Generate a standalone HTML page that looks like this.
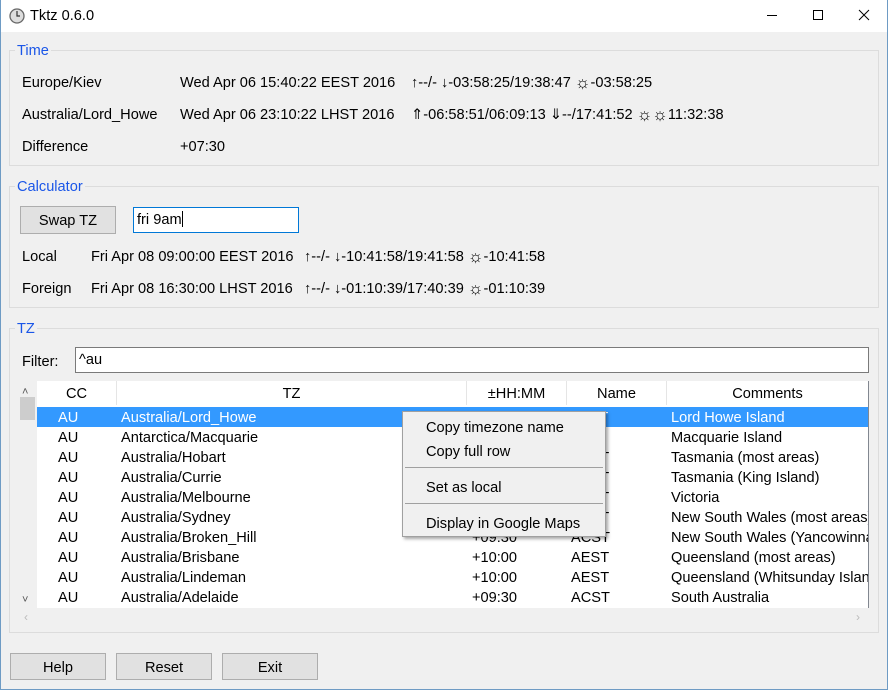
<!DOCTYPE html>
<html><head><meta charset="utf-8"><style>
*{margin:0;padding:0;box-sizing:border-box}
body{width:888px;height:690px;background:#f0f0f0;font-family:"Liberation Sans","DejaVu Sans",sans-serif;font-size:14.6px;color:#000;position:relative;overflow:hidden}
.a{position:absolute;white-space:nowrap;line-height:22px}
.s{font-size:17px;line-height:14px;vertical-align:-1px}
.win{position:absolute;left:0;top:0;width:888px;height:690px;border:1px solid #6e9bc4;border-top:none}
.title{position:absolute;left:0;top:0;width:888px;height:32px;background:#fff}
.grp{position:absolute;border:1px solid #dcdcdc}
.gt{position:absolute;background:#f0f0f0;color:#1a56e8;padding:0 2px;line-height:20px}
.btn{position:absolute;background:#e1e1e1;border:1px solid #adadad;text-align:center;line-height:28px}
.inp{position:absolute;background:#fff;border:1px solid #7a7a7a;padding-left:3px;line-height:25px}
.row{position:absolute;left:37px;width:831px;height:20px}
.c{position:absolute;line-height:22px;top:0;white-space:nowrap;overflow:hidden}
.hd{position:absolute;top:381px;height:24px;line-height:27px;text-align:center;border-right:1px solid #e5e5e5;background:#fff}
.menu{position:absolute;left:402px;top:411px;width:204px;height:126px;background:#f0f0f0;border:1px solid #a0a0a0;box-shadow:2px 2px 3px rgba(0,0,0,.35)}
.mi{position:absolute;left:23px;line-height:22px}
.sep{position:absolute;left:2px;right:2px;height:1px;background:#a0a0a0}
</style></head><body>
<div class="title"></div>
<svg style="position:absolute;left:9px;top:8px" width="16" height="16"><circle cx="8" cy="8" r="7" fill="#ddd" stroke="#666" stroke-width="1.3"/><path d="M8 3v5h3" stroke="#333" stroke-width="1.2" fill="none"/></svg>
<div class="a" style="left:30px;top:5px">Tktz 0.6.0</div>
<div class="a" style="left:767px;top:15px;width:10px;height:1px;background:#000"></div>
<div class="a" style="left:813px;top:10px;width:10px;height:10px;border:1px solid #000"></div>
<svg style="position:absolute;left:858px;top:9px" width="12" height="12"><path d="M1 1L11 11M11 1L1 11" stroke="#000" stroke-width="1"/></svg>
<div class="win"></div>

<div class="grp" style="left:9px;top:50px;width:870px;height:116px"></div>
<div class="gt" style="left:15px;top:41px">Time</div>
<div class="a" style="left:22px;top:72px">Europe/Kiev</div>
<div class="a" style="left:180px;top:72px">Wed Apr 06 15:40:22 EEST 2016</div>
<div class="a" style="left:411px;top:72px">↑--/- ↓-03:58:25/19:38:47 <span class="s">☼</span>-03:58:25</div>
<div class="a" style="left:22px;top:104px">Australia/Lord_Howe</div>
<div class="a" style="left:180px;top:104px">Wed Apr 06 23:10:22 LHST 2016</div>
<div class="a" style="left:411px;top:104px">⇑-06:58:51/06:09:13 ⇓--/17:41:52 <span class="s">☼☼</span>11:32:38</div>
<div class="a" style="left:22px;top:136px">Difference</div>
<div class="a" style="left:180px;top:136px">+07:30</div>

<div class="grp" style="left:9px;top:186px;width:870px;height:122px"></div>
<div class="gt" style="left:15px;top:177px">Calculator</div>
<div class="btn" style="left:20px;top:206px;width:96px;height:28px">Swap TZ</div>
<div class="inp" style="left:133px;top:207px;width:166px;height:26px;border-color:#0078d7">fri 9am<span style="display:inline-block;width:1px;height:16px;background:#000;vertical-align:-3px"></span></div>
<div class="a" style="left:22px;top:246px">Local</div>
<div class="a" style="left:91px;top:246px">Fri Apr 08 09:00:00 EEST 2016</div>
<div class="a" style="left:304px;top:246px">↑--/- ↓-10:41:58/19:41:58 <span class="s">☼</span>-10:41:58</div>
<div class="a" style="left:22px;top:278px">Foreign</div>
<div class="a" style="left:91px;top:278px">Fri Apr 08 16:30:00 LHST 2016</div>
<div class="a" style="left:304px;top:278px">↑--/- ↓-01:10:39/17:40:39 <span class="s">☼</span>-01:10:39</div>

<div class="grp" style="left:9px;top:328px;width:870px;height:305px"></div>
<div class="gt" style="left:15px;top:319px">TZ</div>
<div class="a" style="left:22px;top:351px">Filter:</div>
<div class="inp" style="left:75px;top:347px;width:794px;height:26px">^au</div>

<div class="a" style="left:37px;top:381px;width:832px;height:227px;background:#fff;border-right:1px solid #828790"></div>
<div class="a" style="left:20px;top:397px;width:15px;height:23px;background:#cdcdcd"></div>
<div class="a" style="left:22px;top:381px;color:#555;font-size:11px">˄</div>
<div class="a" style="left:22px;top:589px;color:#555;font-size:11px">˅</div>
<div class="hd" style="left:37px;width:80px">CC</div>
<div class="hd" style="left:117px;width:350px">TZ</div>
<div class="hd" style="left:467px;width:100px">±HH:MM</div>
<div class="hd" style="left:567px;width:100px">Name</div>
<div class="hd" style="left:667px;width:201px;border-right:none">Comments</div>
<div class="a" style="left:20px;top:608px;width:849px;height:18px;background:#f0f0f0"></div>
<div class="a" style="left:24px;top:606px;color:#bbb;font-size:12px">‹</div>
<div class="a" style="left:856px;top:606px;color:#bbb;font-size:12px">›</div>

<div id="rows"></div>
<script>
var d=[["Australia/Lord_Howe","+10:30","LHST","Lord Howe Island"],["Antarctica/Macquarie","+11:00","MIST","Macquarie Island"],["Australia/Hobart","+10:00","AEST","Tasmania (most areas)"],["Australia/Currie","+10:00","AEST","Tasmania (King Island)"],["Australia/Melbourne","+10:00","AEST","Victoria"],["Australia/Sydney","+10:00","AEST","New South Wales (most areas)"],["Australia/Broken_Hill","+09:30","ACST","New South Wales (Yancowinna)"],["Australia/Brisbane","+10:00","AEST","Queensland (most areas)"],["Australia/Lindeman","+10:00","AEST","Queensland (Whitsunday Islands)"],["Australia/Adelaide","+09:30","ACST","South Australia"]];
var h="";d.forEach(function(r,i){var s=i==0?"background:#3399ff;color:#fff;":"";h+='<div class="row" style="top:'+(407+i*20)+'px;'+s+'"><div class="c" style="left:21px">AU</div><div class="c" style="left:84px">'+r[0]+'</div><div class="c" style="left:435px">'+r[1]+'</div><div class="c" style="left:534px">'+r[2]+'</div><div class="c" style="left:634px;width:197px">'+r[3]+'</div></div>';});
document.getElementById("rows").innerHTML=h;
</script>

<div class="menu">
<div class="mi" style="top:5px">Copy timezone name</div>
<div class="mi" style="top:29px">Copy full row</div>
<div class="sep" style="top:55px"></div>
<div class="mi" style="top:65px">Set as local</div>
<div class="sep" style="top:91px"></div>
<div class="mi" style="top:101px">Display in Google Maps</div>
</div>

<div class="btn" style="left:10px;top:653px;width:96px;height:27px">Help</div>
<div class="btn" style="left:116px;top:653px;width:96px;height:27px">Reset</div>
<div class="btn" style="left:222px;top:653px;width:96px;height:27px">Exit</div>
</body></html>
